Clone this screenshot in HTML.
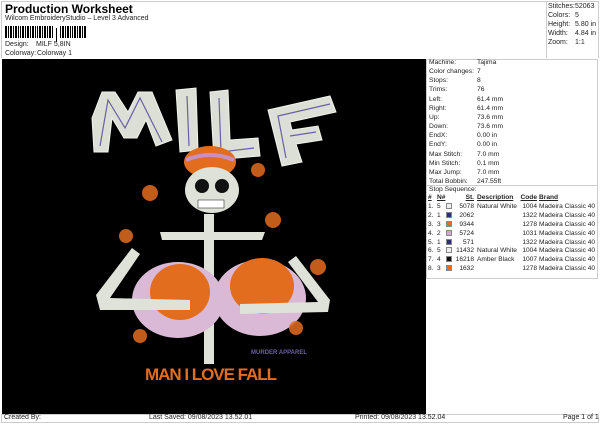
<!DOCTYPE html>
<html><head><meta charset="utf-8"><style>
*{margin:0;padding:0;box-sizing:border-box}
body{width:600px;height:424px;background:#fff;font-family:"Liberation Sans",sans-serif;color:#222;position:relative;overflow:hidden;font-size:7px}
.a{position:absolute;white-space:nowrap}
.bc{position:absolute;left:5px;top:26px;height:12px;display:flex;gap:1px}
.bc i{display:block;background:#000;height:12px}
table{border-collapse:collapse;table-layout:fixed}
td{padding:0;height:8.9px;line-height:8.9px;font-size:6.6px;white-space:nowrap;overflow:hidden}
.sw{display:inline-block;width:6px;height:6px;vertical-align:-1px;border:1px solid #888}
</style></head><body>
<div class="a" style="left:1px;top:1px;width:598px;height:57px;border:1px solid #ccc;border-bottom:none"></div>
<div class="a" style="left:5px;top:2px;font-size:12px;font-weight:bold;color:#000">Production Worksheet</div>
<div class="a" style="left:5px;top:15px;font-size:7px">Wilcom EmbroideryStudio – Level 3 Advanced</div>
<div class="bc">
<i style="width:2px"></i><i style="width:1px"></i><i style="width:2px"></i><i style="width:1px"></i><i style="width:2px"></i><i style="width:1px"></i><i style="width:1px"></i><i style="width:2px"></i><i style="width:1px"></i><i style="width:2px"></i><i style="width:1px"></i><i style="width:2px"></i><i style="width:1px"></i><i style="width:1px"></i><i style="width:2px"></i><i style="width:1px"></i><i style="width:2px"></i><i style="width:1px"></i><i style="width:2px"></i><i style="width:1px"></i><i style="width:1px;height:14px;margin-top:2px;margin-left:2px"></i><i style="width:1px;margin-left:2px"></i><i style="width:2px"></i><i style="width:1px"></i><i style="width:2px"></i><i style="width:1px"></i><i style="width:1px"></i><i style="width:2px"></i><i style="width:1px"></i><i style="width:2px"></i><i style="width:1px"></i><i style="width:2px"></i>
</div>
<div class="a" style="left:5px;top:41px">Design:</div><div class="a" style="left:36px;top:41px">MILF 5,8IN</div>
<div class="a" style="left:5px;top:50px">Colorway:</div><div class="a" style="left:37px;top:50px">Colorway 1</div>
<div class="a" style="left:546px;top:1px;width:53px;height:57px;border-left:1px solid #ccc"></div>
<div class="a" style="left:548px;top:2px;line-height:9px">Stitches:<br>Colors:<br>Height:<br>Width:<br>Zoom:</div>
<div class="a" style="left:575px;top:2px;line-height:9px">52063<br>5<br>5.80 in<br>4.84 in<br>1:1</div>

<div class="a" style="left:2px;top:59px;width:424px;height:355px;background:#000;overflow:hidden">
<svg width="424" height="355" viewBox="2 59 424 355">
<g fill="#dcdfd6" stroke="#f2f2ec" stroke-width="1">
<path d="M92 118 L102 92 L115 92 L128 112 L138 92 L152 92 L172 140 L156 146 L146 120 L137 138 L124 138 L112 118 L108 152 L94 152 Z"/>
<path d="M176 90 L196 88 L198 150 L180 152 Z"/>
<path d="M210 92 L228 90 L230 140 L258 138 L260 156 L214 160 Z"/>
<path d="M268 110 L330 96 L336 112 L290 122 L292 130 L318 126 L322 140 L296 144 L302 162 L282 166 Z"/>
</g>
<g fill="none" stroke="#6b5fa6" stroke-width="1.2">
<path d="M100 146 L108 100 L125 128 L140 98 L162 142"/><path d="M187 96 L189 146"/><path d="M219 98 L221 152 L254 148"/><path d="M286 158 L278 116 L330 104 M290 136 L316 132"/>
</g>
<ellipse cx="210" cy="162" rx="26" ry="16" fill="#e36d1f"/>
<path d="M186 160 Q210 150 234 160" stroke="#c88fbf" stroke-width="4" fill="none"/>
<ellipse cx="212" cy="190" rx="27" ry="23" fill="#dfe2d8"/>
<ellipse cx="202" cy="186" rx="7" ry="7" fill="#111"/><ellipse cx="222" cy="186" rx="7" ry="7" fill="#111"/>
<rect x="198" y="200" width="26" height="8" fill="#fff" stroke="#333" stroke-width="0.6"/>
<path d="M160 232 L265 232 L262 240 L162 240 Z" fill="#dfe2d8"/>
<rect x="204" y="214" width="10" height="150" fill="#dfe2d8"/>
<ellipse cx="178" cy="300" rx="46" ry="38" fill="#d9b9d6"/>
<ellipse cx="180" cy="292" rx="30" ry="28" fill="#e36d1f"/>
<ellipse cx="260" cy="298" rx="46" ry="38" fill="#d9b9d6"/>
<ellipse cx="262" cy="286" rx="32" ry="28" fill="#e36d1f"/>
<path d="M96 295 L132 248 L140 254 L110 298 L190 300 L190 310 L100 310 Z" fill="#dfe2d8"/>
<path d="M330 300 L296 256 L288 262 L318 302 L240 304 L240 314 L328 312 Z" fill="#dfe2d8"/>
<g fill="#e36d1f" opacity="0.85">
<circle cx="150" cy="193" r="8"/><circle cx="258" cy="170" r="7"/><circle cx="273" cy="220" r="8"/><circle cx="126" cy="236" r="7"/><circle cx="318" cy="267" r="8"/><circle cx="140" cy="336" r="7"/><circle cx="296" cy="328" r="7"/>
</g>
<text x="251" y="354" fill="#6b5fa6" font-size="6" font-weight="bold" font-family="Liberation Sans">MURDER APPAREL</text>
<text x="211" y="380" fill="#e36d1f" font-size="17" font-weight="bold" text-anchor="middle" font-family="Liberation Sans" textLength="132">MAN I LOVE FALL</text>
</svg>
</div>

<div class="a" style="left:426px;top:59px;width:172px;height:220px;border:1px solid #ccc"></div>
<div class="a" style="left:426px;top:185px;width:172px;border-top:1px solid #ccc"></div>
<div class="a" style="left:429px;top:58px;line-height:9.15px;font-size:6.7px">Machine:<br>Color changes:<br>Stops:<br>Trims:<br>Left:<br>Right:<br>Up:<br>Down:<br>EndX:<br>EndY:<br>Max Stitch:<br>Min Stitch:<br>Max Jump:<br>Total Bobbin:</div>
<div class="a" style="left:477px;top:58px;line-height:9.15px;font-size:6.7px">Tajima<br>7<br>8<br>76<br>61.4 mm<br>61.4 mm<br>73.6 mm<br>73.6 mm<br>0.00 in<br>0.00 in<br>7.0 mm<br>0.1 mm<br>7.0 mm<br>247.55ft</div>
<div class="a" style="left:429px;top:186px;font-size:6.7px">Stop Sequence:</div>
<table class="a" style="left:428px;top:194px;width:169px">
<colgroup><col style="width:9px"><col style="width:9px"><col style="width:9px"><col style="width:19px"><col style="width:45px"><col style="width:18px"><col style="width:60px"></colgroup>
<tr style="font-weight:bold;text-decoration:underline"><td>#</td><td>N#</td><td></td><td style="text-align:right">St.</td><td style="padding-left:3px">Description</td><td style="text-align:right">Code</td><td style="padding-left:2px">Brand</td></tr>
<tr><td>1.</td><td>5</td><td><span class="sw" style="background:#eee"></span></td><td align="right">5078</td><td style="padding-left:3px">Natural White</td><td align="right">1004</td><td style="padding-left:2px">Madeira Classic 40</td></tr>
<tr><td>2.</td><td>1</td><td><span class="sw" style="background:#2e2d7a"></span></td><td align="right">2062</td><td></td><td align="right">1322</td><td style="padding-left:2px">Madeira Classic 40</td></tr>
<tr><td>3.</td><td>3</td><td><span class="sw" style="background:#f06a1c"></span></td><td align="right">9344</td><td></td><td align="right">1278</td><td style="padding-left:2px">Madeira Classic 40</td></tr>
<tr><td>4.</td><td>2</td><td><span class="sw" style="background:#d2a6cf"></span></td><td align="right">5724</td><td></td><td align="right">1031</td><td style="padding-left:2px">Madeira Classic 40</td></tr>
<tr><td>5.</td><td>1</td><td><span class="sw" style="background:#2e2d7a"></span></td><td align="right">571</td><td></td><td align="right">1322</td><td style="padding-left:2px">Madeira Classic 40</td></tr>
<tr><td>6.</td><td>5</td><td><span class="sw" style="background:#eee"></span></td><td align="right">11432</td><td style="padding-left:3px">Natural White</td><td align="right">1004</td><td style="padding-left:2px">Madeira Classic 40</td></tr>
<tr><td>7.</td><td>4</td><td><span class="sw" style="background:#111"></span></td><td align="right">16218</td><td style="padding-left:3px">Amber Black</td><td align="right">1007</td><td style="padding-left:2px">Madeira Classic 40</td></tr>
<tr><td>8.</td><td>3</td><td><span class="sw" style="background:#f06a1c"></span></td><td align="right">1632</td><td></td><td align="right">1278</td><td style="padding-left:2px">Madeira Classic 40</td></tr>
</table>

<div class="a" style="left:1px;top:414px;width:598px;height:9px;border:1px solid #ccc"></div>
<div class="a" style="left:4px;top:414px">Created By:</div>
<div class="a" style="left:149px;top:414px">Last Saved: 09/08/2023 13.52.01</div>
<div class="a" style="left:355px;top:414px">Printed: 09/08/2023 13.52.04</div>
<div class="a" style="left:563px;top:414px">Page 1 of 1</div>
</body></html>
